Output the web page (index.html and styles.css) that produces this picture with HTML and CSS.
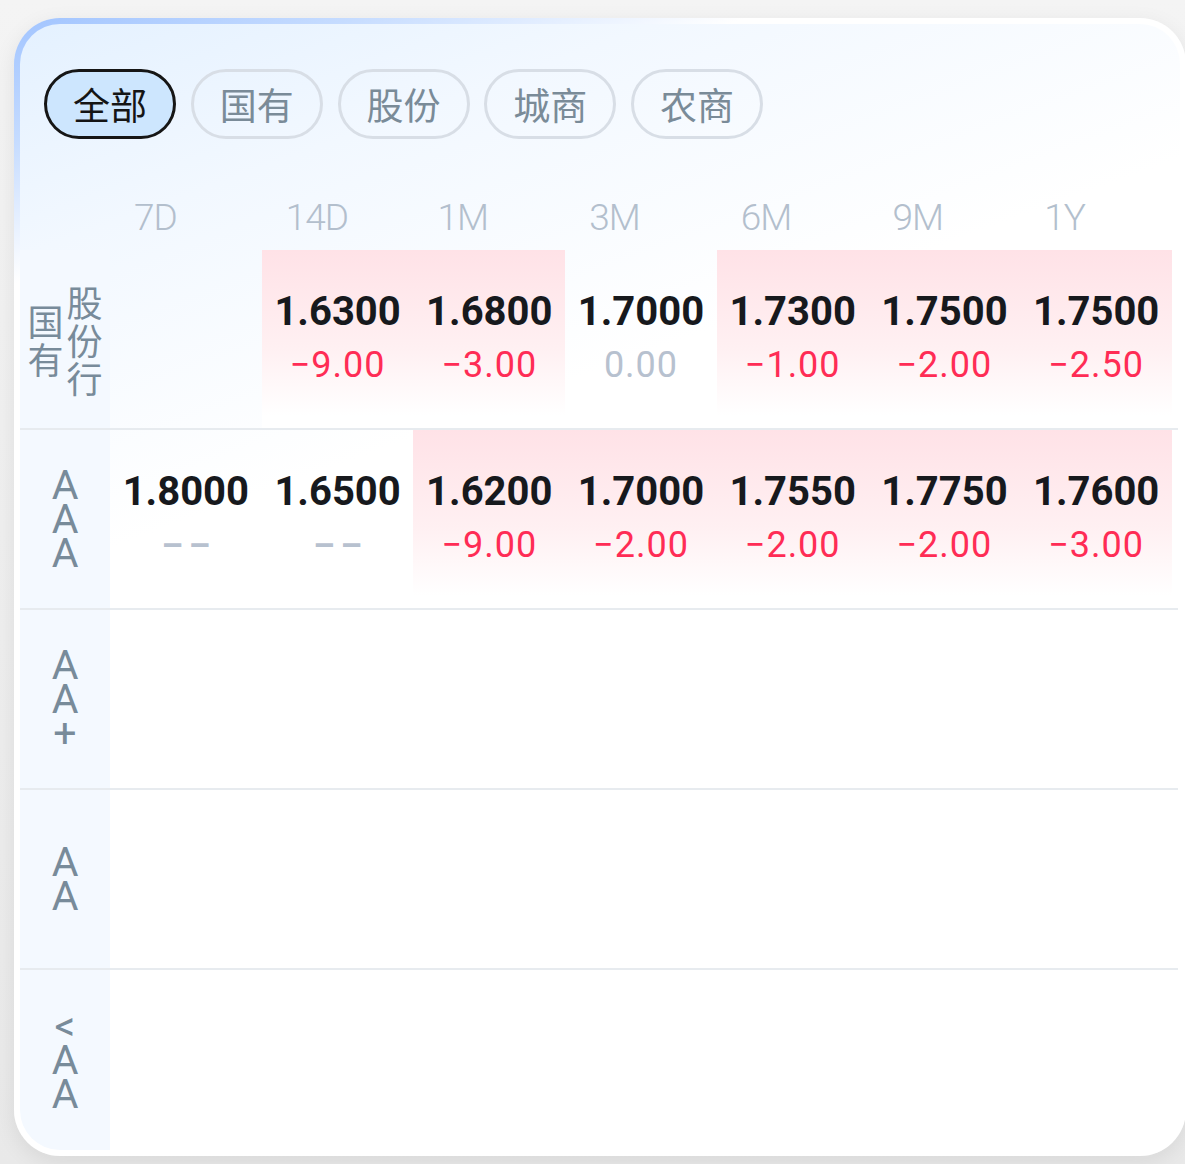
FILE: index.html
```html
<!DOCTYPE html>
<html lang="zh-CN">
<head>
<meta charset="utf-8">
<link rel="stylesheet" href="styles.css">
</head>
<body>
<div class="card">
  <div class="inner">
    <div class="tabs">
      <span class="tab active">全部</span>
      <span class="tab">国有</span>
      <span class="tab">股份</span>
      <span class="tab">城商</span>
      <span class="tab">农商</span>
    </div>
    <div class="head">
      <span></span>
      <span class="h">7D</span>
      <span class="h">14D</span>
      <span class="h">1M</span>
      <span class="h">3M</span>
      <span class="h">6M</span>
      <span class="h">9M</span>
      <span class="h">1Y</span>
    </div>

    <div class="row">
      <div class="label"><span class="lc">国有</span><span class="lc">股份行</span></div>
      <div class="cell"></div>
      <div class="cell neg"><div class="v">1.6300</div><div class="c">−9.00</div></div>
      <div class="cell neg"><div class="v">1.6800</div><div class="c">−3.00</div></div>
      <div class="cell"><div class="v">1.7000</div><div class="c zero">0.00</div></div>
      <div class="cell neg"><div class="v">1.7300</div><div class="c">−1.00</div></div>
      <div class="cell neg"><div class="v">1.7500</div><div class="c">−2.00</div></div>
      <div class="cell neg"><div class="v">1.7500</div><div class="c">−2.50</div></div>
    </div>

    <div class="row">
      <div class="label"><span class="ll">AAA</span></div>
      <div class="cell"><div class="v">1.8000</div><div class="c none">––</div></div>
      <div class="cell"><div class="v">1.6500</div><div class="c none">––</div></div>
      <div class="cell neg"><div class="v">1.6200</div><div class="c">−9.00</div></div>
      <div class="cell neg"><div class="v">1.7000</div><div class="c">−2.00</div></div>
      <div class="cell neg"><div class="v">1.7550</div><div class="c">−2.00</div></div>
      <div class="cell neg"><div class="v">1.7750</div><div class="c">−2.00</div></div>
      <div class="cell neg"><div class="v">1.7600</div><div class="c">−3.00</div></div>
    </div>

    <div class="row">
      <div class="label"><span class="ll">AA+</span></div>
      <div class="cell"></div><div class="cell"></div><div class="cell"></div><div class="cell"></div>
      <div class="cell"></div><div class="cell"></div><div class="cell"></div>
    </div>

    <div class="row">
      <div class="label"><span class="ll">AA</span></div>
      <div class="cell"></div><div class="cell"></div><div class="cell"></div><div class="cell"></div>
      <div class="cell"></div><div class="cell"></div><div class="cell"></div>
    </div>

    <div class="row last">
      <div class="label"><span class="ll">&lt;AA</span></div>
      <div class="cell"></div><div class="cell"></div><div class="cell"></div><div class="cell"></div>
      <div class="cell"></div><div class="cell"></div><div class="cell"></div>
    </div>
  </div>
</div>
</body>
</html>
```

FILE: styles.css
```css
html, body {
  margin: 0;
  padding: 0;
}
body {
  background: linear-gradient(180deg, #f4f4f4 0%, #e9e9e9 100%);
  height: 1164px;
  overflow: hidden;
  font-family: Roboto, "Noto Sans CJK SC", sans-serif;
}
.card {
  margin: 18px 0 0 14px;
  width: 1172px;
  height: 1138px;
  box-sizing: border-box;
  padding: 6px;
  border-radius: 46px;
  background: linear-gradient(160deg, #a1c4ff 0%, #c6dcff 8%, #ffffff 17%);
  box-shadow: 0 6px 22px rgba(0, 0, 0, 0.08);
}
.inner {
  height: 100%;
  border-radius: 40px;
  overflow: hidden;
  background: linear-gradient(160deg, #e4f1ff 0%, #f2f8ff 15%, #ffffff 36%);
  display: flex;
  flex-direction: column;
  padding-top: 45px;
  box-sizing: border-box;
}
.tabs {
  display: flex;
  gap: 14.75px;
  padding-left: 24px;
}
.tab {
  width: 132px;
  height: 70px;
  box-sizing: border-box;
  border: 3px solid #d8dee6;
  border-radius: 35px;
  display: flex;
  align-items: center;
  justify-content: center;
  font-family: "Noto Sans CJK SC", sans-serif;
  font-size: 37px;
  color: #7a8b98;
}
.tab.active {
  border-color: #161616;
  background: #cde6fe;
  color: #151515;
}
.head {
  display: grid;
  grid-template-columns: 90px repeat(7, 1fr);
  margin: 47px 8px 0 0;
  height: 64px;
  line-height: 64px;
}
.h {
  padding-left: 24px;
  font-family: Roboto, sans-serif;
  font-weight: 300;
  font-size: 37px;
  letter-spacing: -1px;
  color: #b3bfcd;
}
.row {
  display: grid;
  grid-template-columns: 90px repeat(7, 1fr);
  height: 178px;
  border-bottom: 2px solid #e7ebef;
  margin-right: 2px;
  padding-right: 6px;
}
.row.last {
  border-bottom: none;
  flex: 1;
}
.label {
  background: #f4f9ff;
  display: flex;
  justify-content: center;
  align-items: center;
  gap: 2px;
  color: #788b9a;
}
.lc {
  width: 37px;
  font-family: "Noto Sans CJK SC", sans-serif;
  font-size: 36px;
  line-height: 38px;
  text-align: center;
}
.ll {
  width: 30px;
  font-family: Roboto, sans-serif;
  font-size: 41px;
  line-height: 34px;
  text-align: center;
  word-break: break-all;
}
.cell {
  text-align: center;
  padding-top: 38px;
}
.cell.neg {
  background: linear-gradient(180deg, #ffe2e7 0%, #fff0f2 55%, #ffffff 93%);
}
.v {
  font-family: Roboto, sans-serif;
  font-weight: 700;
  font-size: 40px;
  line-height: 48px;
  color: #17191d;
}
.c {
  font-family: Roboto, sans-serif;
  font-size: 36px;
  letter-spacing: 1px;
  line-height: 48px;
  margin-top: 5px;
  color: #ff2c55;
}
.c.zero {
  color: #b7c1cf;
}
.c.none {
  color: #b7c1cf;
  font-size: 34px;
  font-weight: 700;
  letter-spacing: 6px;
  padding-left: 6px;
}
```
